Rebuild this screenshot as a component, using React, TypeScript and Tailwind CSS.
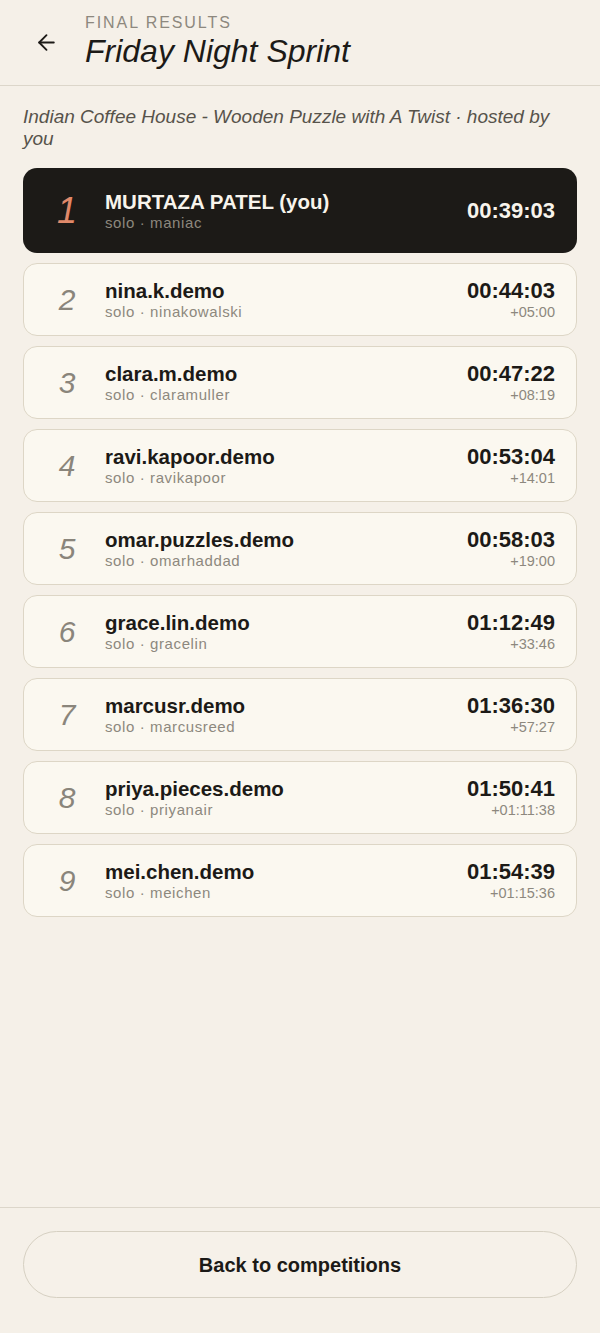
import { ArrowLeft } from "lucide-react";

type Row = { rank: number; name: string; handle: string; time: string; delta?: string; you?: boolean };

const rows: Row[] = [
  { rank: 1, name: "MURTAZA PATEL (you)", handle: "maniac", time: "00:39:03", you: true },
  { rank: 2, name: "nina.k.demo", handle: "ninakowalski", time: "00:44:03", delta: "+05:00" },
  { rank: 3, name: "clara.m.demo", handle: "claramuller", time: "00:47:22", delta: "+08:19" },
  { rank: 4, name: "ravi.kapoor.demo", handle: "ravikapoor", time: "00:53:04", delta: "+14:01" },
  { rank: 5, name: "omar.puzzles.demo", handle: "omarhaddad", time: "00:58:03", delta: "+19:00" },
  { rank: 6, name: "grace.lin.demo", handle: "gracelin", time: "01:12:49", delta: "+33:46" },
  { rank: 7, name: "marcusr.demo", handle: "marcusreed", time: "01:36:30", delta: "+57:27" },
  { rank: 8, name: "priya.pieces.demo", handle: "priyanair", time: "01:50:41", delta: "+01:11:38" },
  { rank: 9, name: "mei.chen.demo", handle: "meichen", time: "01:54:39", delta: "+01:15:36" },
];

function ResultRow({ row }: { row: Row }) {
  if (row.you) {
    return (
      <div className="flex items-center rounded-[14px] bg-[#1c1a17] px-[22px] py-[21px]">
        <div className="w-[60px] pr-[16px] text-center text-[36px] italic leading-none text-[#e0896a]">{row.rank}</div>
        <div className="min-w-0 flex-1">
          <div className="text-[20.5px] font-bold leading-[25px] text-[#f8f4ec]">{row.name}</div>
          <div className="text-[15px] leading-[18px] tracking-[0.04em] text-[#8d887e]">solo · {row.handle}</div>
        </div>
        <div className="text-[22px] font-bold leading-[26px] text-[#f8f4ec]">{row.time}</div>
      </div>
    );
  }
  return (
    <div className="flex items-center rounded-[14px] border-[1.5px] border-[#ddd6c6] bg-[#fbf8f0] px-[21px] py-[14px]">
      <div className="w-[60px] pr-[16px] text-center text-[30px] italic leading-none text-[#8a857b]">{row.rank}</div>
      <div className="min-w-0 flex-1">
        <div className="text-[20.5px] font-bold leading-[25px] text-[#1c1a17]">{row.name}</div>
        <div className="text-[15px] leading-[18px] tracking-[0.04em] text-[#8d887e]">solo · {row.handle}</div>
      </div>
      <div className="text-right">
        <div className="text-[22px] font-bold leading-[25px] text-[#1c1a17]">{row.time}</div>
        <div className="text-[14.5px] leading-[18px] text-[#8d887e]">{row.delta}</div>
      </div>
    </div>
  );
}

export default function App() {
  return (
    <div
      className="flex h-[1333px] flex-col bg-[#f5f0e8] text-[#1c1a17]"
      style={{ fontFamily: '"Liberation Sans", Arial, sans-serif' }}
    >
      <header className="flex h-[86px] items-start border-b-[1.5px] border-[#dcd6ca] px-[32px]">
        <button className="mr-[25px] mt-[28px] flex h-[28px] w-[28px] items-center justify-center text-[#1c1a17]">
          <ArrowLeft className="h-[25px] w-[25px]" strokeWidth={1.8} />
        </button>
        <div className="pt-[13px]">
          <div className="text-[16px] leading-[20px] tracking-[0.12em] text-[#8d887e]">FINAL RESULTS</div>
          <div className="text-[32px] italic leading-[36px] text-[#1c1a17]">Friday Night Sprint</div>
        </div>
      </header>

      <main className="flex-1 px-[23px] pt-[20px]">
        <p className="mb-[18px] text-[19px] italic leading-[22px] text-[#57534b]">
          Indian Coffee House - Wooden Puzzle with A Twist · hosted by you
        </p>
        <div className="flex flex-col gap-[10px]">
          {rows.map((r) => (
            <ResultRow key={r.rank} row={r} />
          ))}
        </div>
      </main>

      <footer className="border-t-[1.5px] border-[#dcd6ca] px-[23px] pb-[35px] pt-[23px]">
        <button className="flex h-[67px] w-full items-center justify-center rounded-full border-[1.5px] border-[#d6d0c2] bg-[#f6f1e9] text-[20px] font-bold text-[#1c1a17]">
          Back to competitions
        </button>
      </footer>
    </div>
  );
}
